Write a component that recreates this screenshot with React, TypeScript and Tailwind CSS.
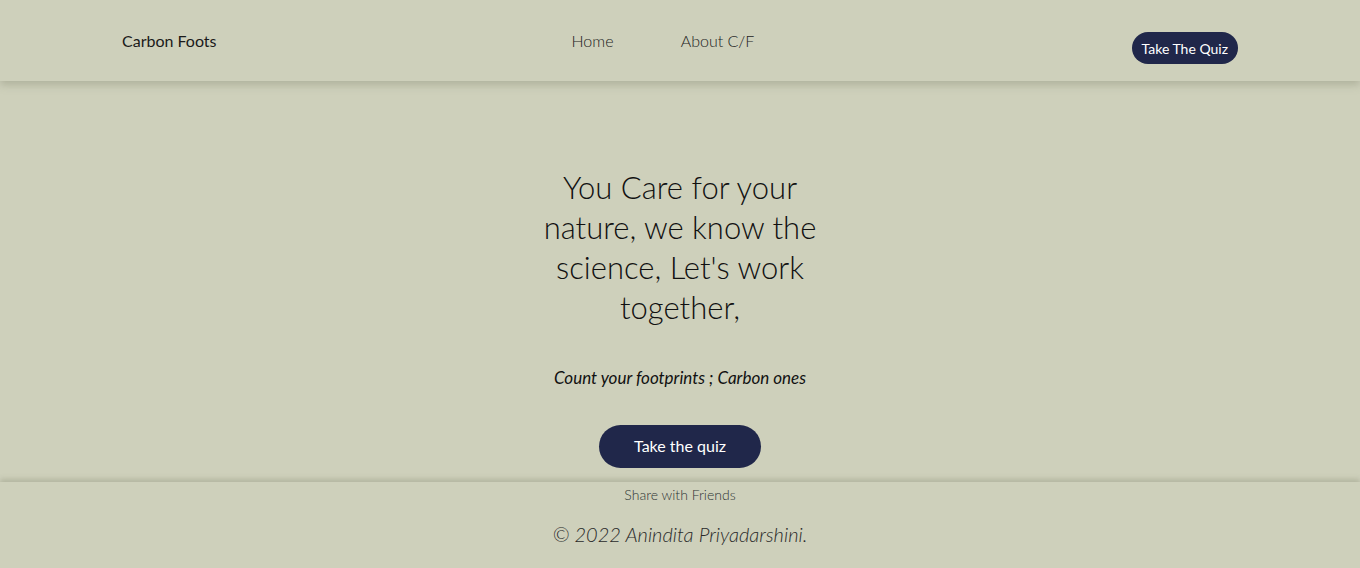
import * as React from 'react';

export default function App() {
  return (
    <div className="min-h-screen bg-[#ced0bb] text-[#111] font-['Lato','Open_Sans',sans-serif] flex flex-col">
      {/* header */}
      <header className="h-[81px] relative z-10 flex items-start shadow-[0_4px_8px_rgba(120,122,100,0.35)] bg-[#ced0bb]">
        <div className="w-[540px] pl-[122px] pt-[29px] text-[16px] text-[#1a1a1a]">Carbon Foots</div>
        <nav className="flex">
          <a className="h-[81px] w-[105px] flex justify-center pt-[29px] text-[16px] font-light text-[#222] bg-[#ced0bb]">Home</a>
          <a className="h-[81px] w-[135px] ml-[5px] flex justify-center pt-[29px] text-[16px] font-light text-[#222] bg-[#ced0bb]">About C/F</a>
        </nav>
        <div className="flex-1 flex justify-end pr-[122px] pt-[32px]">
          <button className="h-[32px] px-[10px] rounded-full bg-[#20274a] text-white text-[14px]">Take The Quiz</button>
        </div>
      </header>

      {/* hero */}
      <main className="h-[401px] flex flex-col items-center pt-[86px]">
        <h1 className="w-[290px] text-center text-[31px] leading-[40px] font-light text-[#111]">
          You Care for your nature, we know the science, Let's work together,
        </h1>
        <p className="mt-[38px] text-[17px] italic text-[#111]">Count your footprints ; Carbon ones</p>
        <button className="mt-[34px] w-[162px] h-[43px] rounded-full bg-[#20274a] text-white text-[16px]">Take the quiz</button>
      </main>

      {/* footer */}
      <footer className="flex flex-col items-center shadow-[0_-3px_5px_rgba(120,122,100,0.3)] h-[86px]">
        <div className="mt-[2px] text-[14px] font-light text-[#2f3535]">Share with Friends</div>
        <div className="mt-[14px] text-[20px] italic font-light text-[#2a2a2a]">© 2022 Anindita Priyadarshini.</div>
      </footer>
    </div>
  );
}
